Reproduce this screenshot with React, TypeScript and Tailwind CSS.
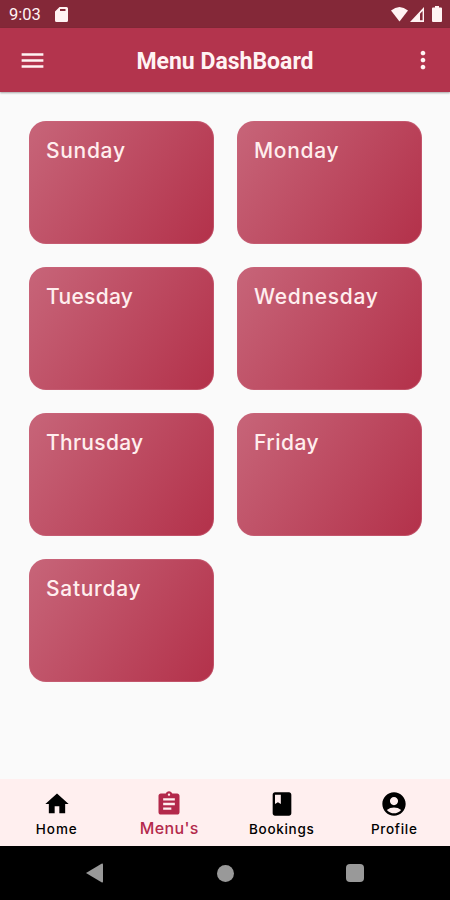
import type { IconType } from "react-icons";
import {
  MdAccountCircle,
  MdAssignment,
  MdBook,
  MdHome,
  MdMenu,
  MdMoreVert,
} from "react-icons/md";

type Day = {
  label: string;
  spacing: string;
};

const DAYS: Day[] = [
  { label: "Sunday", spacing: "tracking-[0.7px]" },
  { label: "Monday", spacing: "tracking-[0.7px]" },
  { label: "Tuesday", spacing: "tracking-[0.3px]" },
  { label: "Wednesday", spacing: "tracking-[0.7px]" },
  { label: "Thrusday", spacing: "tracking-[0.3px]" },
  { label: "Friday", spacing: "tracking-[0.5px]" },
  { label: "Saturday", spacing: "tracking-[0.7px]" },
];

type Tab = {
  label: string;
  icon: IconType;
  spacing: string;
  active?: boolean;
};

const TABS: Tab[] = [
  { label: "Home", icon: MdHome, spacing: "tracking-[1px]" },
  { label: "Menu's", icon: MdAssignment, spacing: "tracking-[0.4px]", active: true },
  { label: "Bookings", icon: MdBook, spacing: "tracking-[0.7px]" },
  { label: "Profile", icon: MdAccountCircle, spacing: "tracking-[0.7px]" },
];

function StatusBar() {
  return (
    <div className="flex h-7 items-center bg-[#842838] pl-[9px] pr-2 text-[#fff3f3]">
      <span className="w-[46px] pt-[3px] font-[Roboto,sans-serif] text-[16.5px] leading-none">
        9:03
      </span>
      <svg className="mt-px h-[15px] w-[13px]" viewBox="0 0 13 15" fill="currentColor">
        <path
          fillRule="evenodd"
          d="M4.5 0H11.5Q13 0 13 1.5V13.5Q13 15 11.5 15H1.5Q0 15 0 13.5V4.5ZM5 2V4H10.5V2Z"
        />
      </svg>
      <div className="ml-auto flex items-center">
        <svg className="h-[15px] w-[17px]" viewBox="0 0 17 15" fill="currentColor">
          <path d="M0 3.5Q8.5-3.5 17 3.5L8.5 14.5Z" />
        </svg>
        <svg className="ml-0.5 h-[15px] w-[14px]" viewBox="0 0 14 15" fill="currentColor">
          <path fillRule="evenodd" d="M14 0V15H0ZM12.6 4L10 6.8V13.2H12.6Z" />
        </svg>
        <svg className="ml-2 h-4 w-[10px]" viewBox="0 0 10 16" fill="currentColor">
          <path d="M3 0H7V1.5H9Q10 1.5 10 2.5V15Q10 16 9 16H1Q0 16 0 15V2.5Q0 1.5 1 1.5H3Z" />
        </svg>
      </div>
    </div>
  );
}

function AppBar() {
  return (
    <header className="relative flex h-16 items-center justify-between bg-[#b3344d] pl-[18px] pr-[13px] text-[#fff3f3] shadow-[0_1px_2px_rgba(0,0,0,0.35)]">
      <button type="button" aria-label="Menu">
        <MdMenu size={29} />
      </button>
      <h1 className="pr-1.5 pt-0.5 font-[Roboto,sans-serif] text-[23px] font-bold leading-none">
        Menu DashBoard
      </h1>
      <button type="button" aria-label="More">
        <MdMoreVert size={28} />
      </button>
    </header>
  );
}

function DayCard({ label, spacing }: Day) {
  return (
    <button
      type="button"
      className="flex h-[123px] items-start rounded-[17px] border border-[#c9647a]/60 bg-[linear-gradient(124deg,#c76579,#b3314a)] bg-origin-border pl-4 pt-[15px] text-left"
    >
      <span className={`text-[21px] font-medium leading-7 text-[#ffeeee] ${spacing}`}>{label}</span>
    </button>
  );
}

function TabItem({ label, icon: Icon, spacing, active }: Tab) {
  return (
    <button
      type="button"
      className={`flex flex-1 flex-col items-center pl-px pt-[11px] ${active ? "text-[#b3294b]" : "text-black"}`}
    >
      <Icon size={28} />
      <span
        className={`font-medium ${spacing} ${active ? "text-base leading-5" : "pt-px text-[13.5px] leading-5"}`}
      >
        {label}
      </span>
    </button>
  );
}

export default function App() {
  return (
    <div className="flex h-[900px] w-[450px] flex-col overflow-hidden bg-[#fafafa] font-[Inter,sans-serif]">
      <StatusBar />
      <AppBar />
      <main className="grid flex-1 grid-cols-2 content-start gap-[23px] pl-[29px] pr-7 pt-[29px]">
        {DAYS.map((day) => (
          <DayCard key={day.label} {...day} />
        ))}
      </main>
      <nav className="flex h-[67px] bg-[#ffefef]">
        {TABS.map((tab) => (
          <TabItem key={tab.label} {...tab} />
        ))}
      </nav>
      <div className="flex h-[54px] items-center bg-black pl-[86px] text-[#999]">
        <svg className="h-5 w-[17px]" viewBox="0 0 17 20" fill="currentColor">
          <path d="M0 10L15.5 0.8Q17 0 17 1.5V18.5Q17 20 15.5 19.2Z" />
        </svg>
        <div className="ml-[114px] size-[17px] rounded-full bg-[#999]" />
        <div className="ml-[112px] size-[18px] rounded-sm bg-[#999]" />
      </div>
    </div>
  );
}
